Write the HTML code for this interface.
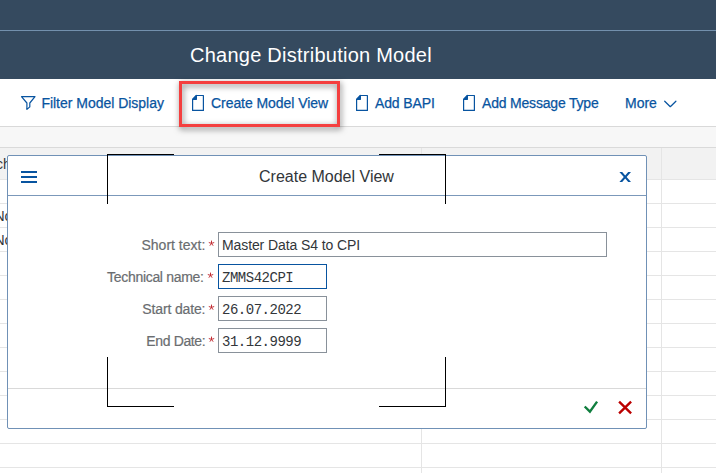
<!DOCTYPE html>
<html>
<head>
<meta charset="utf-8">
<title>Change Distribution Model</title>
<style>
*{box-sizing:border-box;margin:0;padding:0}
html,body{width:716px;height:473px;overflow:hidden;background:#fff;font-family:"Liberation Sans",sans-serif;}
body{position:relative}
.abs{position:absolute}
#shell{left:0;top:0;width:716px;height:79px;background:#354a5f}
#shell-line{left:0;top:30px;width:716px;height:1px;background:#7390ad}
#title{left:190px;top:42px;height:26px;line-height:26px;font-size:20px;color:#fff;white-space:nowrap;letter-spacing:0.25px}
#toolbar{left:0;top:79px;width:716px;height:47px;background:#fff}
#tb-border{left:0;top:126px;width:716px;height:1px;background:#d9d9d9}
.tbtxt{top:94px;height:18px;line-height:18px;font-size:14px;color:#0854a0;white-space:nowrap;-webkit-text-stroke:0.25px #0854a0}
#gap{left:0;top:127px;width:716px;height:20px;background:#f7f7f7}
#grid{left:0;top:147px;width:716px;height:326px;background:#fff}
#ghead{left:0;top:147px;width:716px;height:32px;background:#f2f2f2;border-top:1px solid #dadada}
.hl{left:0;width:716px;height:1px;background:#e5e5e5}
.vl{top:148px;width:1px;height:325px;background:#e5e5e5}
.celltxt{font-size:14px;color:#32363a;white-space:nowrap}
#redbox{left:179px;top:81px;width:161px;height:46px;border:3px solid #f43f3f;filter:drop-shadow(1px 2px 3px rgba(0,0,0,.55))}
#dlg{left:7px;top:155px;width:640px;height:274px;background:#fff;border:1px solid #7091b6;border-radius:2px}
#dlg-hline{left:8px;top:195px;width:638px;height:1px;background:#7b98ba}
#dlg-fline{left:8px;top:388px;width:638px;height:1px;background:#d9d9d9}
#dlg-title{left:259px;top:166px;height:22px;line-height:22px;font-size:16px;color:#32363a;white-space:nowrap}
.lbl{height:18px;line-height:18px;font-size:14px;color:#6a6d70;-webkit-text-stroke:0.2px #6a6d70;white-space:nowrap;text-align:right;left:60px;width:144px}
.inp{left:218px;height:25px;border:1px solid #89919a;background:#fff;font-size:14px;color:#32363a;line-height:25px;padding-left:3px;white-space:nowrap;overflow:hidden}
.mono{font-family:"Liberation Mono",monospace;font-size:14px;letter-spacing:-0.48px;line-height:26px}
.crop{background:#000}
</style>
</head>
<body>
<div id="shell" class="abs"></div>
<div id="shell-line" class="abs"></div>
<div id="title" class="abs">Change Distribution Model</div>

<div id="toolbar" class="abs"></div>
<div id="tb-border" class="abs"></div>
<div id="gap" class="abs"></div>
<div id="grid" class="abs"></div>
<div id="ghead" class="abs"></div>

<!-- grid lines -->
<div class="abs hl" style="top:179px"></div>
<div class="abs hl" style="top:203px"></div>
<div class="abs hl" style="top:227px"></div>
<div class="abs hl" style="top:251px"></div>
<div class="abs hl" style="top:275px"></div>
<div class="abs hl" style="top:299px"></div>
<div class="abs hl" style="top:323px"></div>
<div class="abs hl" style="top:347px"></div>
<div class="abs hl" style="top:371px"></div>
<div class="abs hl" style="top:395px"></div>
<div class="abs hl" style="top:419px"></div>
<div class="abs hl" style="top:443px"></div>
<div class="abs hl" style="top:467px"></div>
<div class="abs vl" style="left:421px"></div>
<div class="abs vl" style="left:661px"></div>

<div class="abs celltxt" style="left:-4px;top:155px;line-height:18px">ch</div>
<div class="abs celltxt" style="left:-5.5px;top:207px;line-height:18px">Nc</div>
<div class="abs celltxt" style="left:-5.5px;top:231px;line-height:18px">Nc</div>

<!-- toolbar items -->
<svg class="abs" style="left:20px;top:95px" width="17" height="17" viewBox="0 0 17 17" fill="none" stroke="#0854a0" stroke-width="1.2" stroke-linejoin="round" stroke-linecap="round">
  <path d="M1.5 1.7 H15 L9.8 8 V11.9 L6.9 14.4 V8 Z"/>
</svg>
<div class="abs tbtxt" style="left:41.4px;letter-spacing:-0.02px">Filter Model Display</div>

<svg class="abs docico" style="left:191px;top:94px" width="14" height="18" viewBox="0 0 14 18" fill="none" stroke="#0854a0" stroke-width="1.2" stroke-linejoin="round">
  <path d="M5.4 1.5 H12.4 V16.4 H1.6 V5.3 Z"/><path d="M5.4 1.5 V5.3 H1.6 Z" fill="#0854a0"/>
</svg>
<div class="abs tbtxt" style="left:211px;letter-spacing:-0.06px">Create Model View</div>

<svg class="abs docico" style="left:355px;top:94px" width="14" height="18" viewBox="0 0 14 18" fill="none" stroke="#0854a0" stroke-width="1.2" stroke-linejoin="round">
  <path d="M5.4 1.5 H12.4 V16.4 H1.6 V5.3 Z"/><path d="M5.4 1.5 V5.3 H1.6 Z" fill="#0854a0"/>
</svg>
<div class="abs tbtxt" style="left:375px;letter-spacing:-0.13px">Add BAPI</div>

<svg class="abs docico" style="left:462px;top:94px" width="14" height="18" viewBox="0 0 14 18" fill="none" stroke="#0854a0" stroke-width="1.2" stroke-linejoin="round">
  <path d="M5.4 1.5 H12.4 V16.4 H1.6 V5.3 Z"/><path d="M5.4 1.5 V5.3 H1.6 Z" fill="#0854a0"/>
</svg>
<div class="abs tbtxt" style="left:482px;letter-spacing:-0.19px">Add Message Type</div>

<div class="abs tbtxt" style="left:625px">More</div>
<svg class="abs" style="left:663px;top:97px" width="16" height="12" viewBox="0 0 16 12" fill="none" stroke="#0854a0" stroke-width="1.25" stroke-linecap="round" stroke-linejoin="round">
  <path d="M1.7 4.2 L7.3 9.7 L12.9 4.2"/>
</svg>

<div id="redbox" class="abs"></div>

<!-- dialog -->
<div id="dlg" class="abs"></div>
<div id="dlg-hline" class="abs"></div>
<div id="dlg-fline" class="abs"></div>
<div id="dlg-title" class="abs">Create Model View</div>

<!-- hamburger -->
<div class="abs" style="left:21px;top:171px;width:16px;height:2px;background:#0854a0"></div>
<div class="abs" style="left:21px;top:176px;width:16px;height:2px;background:#0854a0"></div>
<div class="abs" style="left:21px;top:181px;width:16px;height:2px;background:#0854a0"></div>

<!-- close -->
<svg class="abs" style="left:617px;top:170px" width="16" height="14" viewBox="0 0 16 14">
  <path fill="#0854a0" d="M2.4 2 H5.2 L8.2 5.41 L11.2 2 H14 L9.6 7 L14 12 H11.2 L8.2 8.59 L5.2 12 H2.4 L6.8 7 Z"/>
</svg>

<!-- form -->
<svg width="0" height="0" style="position:absolute"><defs>
<g id="ast" fill="none" stroke="#c0262c" stroke-width="0.95" stroke-linecap="butt">
<path d="M3.5 3.4 L3.5 0.6 M3.5 3.4 L6.2 2.5 M3.5 3.4 L5.15 5.7 M3.5 3.4 L1.85 5.7 M3.5 3.4 L0.8 2.5"/></g>
</defs></svg>
<div class="abs lbl" style="top:236px;width:145.3px">Short text:</div>
<svg class="abs" style="left:207.5px;top:240px" width="7" height="7"><use href="#ast"/></svg>
<div class="abs inp" style="top:232px;width:389px;letter-spacing:-0.1px">Master Data S4 to CPI</div>

<div class="abs lbl" style="top:268px;width:143.6px;letter-spacing:-0.31px">Technical name:</div>
<svg class="abs" style="left:206.5px;top:272px" width="7" height="7"><use href="#ast"/></svg>
<div class="abs inp mono" style="top:264px;width:109px;border-color:#0854a0">ZMMS42CPI</div>

<div class="abs lbl" style="top:300px;width:145.3px;letter-spacing:-0.15px">Start date:</div>
<svg class="abs" style="left:207.5px;top:304px" width="7" height="7"><use href="#ast"/></svg>
<div class="abs inp mono" style="top:296px;width:109px">26.07.2022</div>

<div class="abs lbl" style="top:332px;width:145.3px;letter-spacing:-0.37px">End Date:</div>
<svg class="abs" style="left:207.5px;top:336px" width="7" height="7"><use href="#ast"/></svg>
<div class="abs inp mono" style="top:328px;width:109px">31.12.9999</div>

<!-- footer icons -->
<svg class="abs" style="left:582px;top:398px" width="18" height="18" viewBox="0 0 18 18" fill="none" stroke="#107e3e" stroke-width="2.4">
  <path d="M2.7 8.5 L7.9 13.6 L15.1 3.6"/>
</svg>
<svg class="abs" style="left:616px;top:398px" width="18" height="18" viewBox="0 0 18 18" fill="none" stroke="#bb0000" stroke-width="2.4">
  <path d="M3.1 3.7 L15.1 15.3 M15.1 3.7 L3.1 15.3"/>
</svg>

<!-- crop marks -->
<div class="abs crop" style="left:107px;top:154px;width:67px;height:1px"></div>
<div class="abs crop" style="left:107px;top:154px;width:1px;height:50px"></div>
<div class="abs crop" style="left:379px;top:154px;width:67px;height:1px"></div>
<div class="abs crop" style="left:445px;top:154px;width:1px;height:50px"></div>
<div class="abs crop" style="left:107px;top:357px;width:1px;height:50px"></div>
<div class="abs crop" style="left:107px;top:406px;width:67px;height:1px"></div>
<div class="abs crop" style="left:445px;top:357px;width:1px;height:50px"></div>
<div class="abs crop" style="left:379px;top:406px;width:67px;height:1px"></div>
</body>
</html>
